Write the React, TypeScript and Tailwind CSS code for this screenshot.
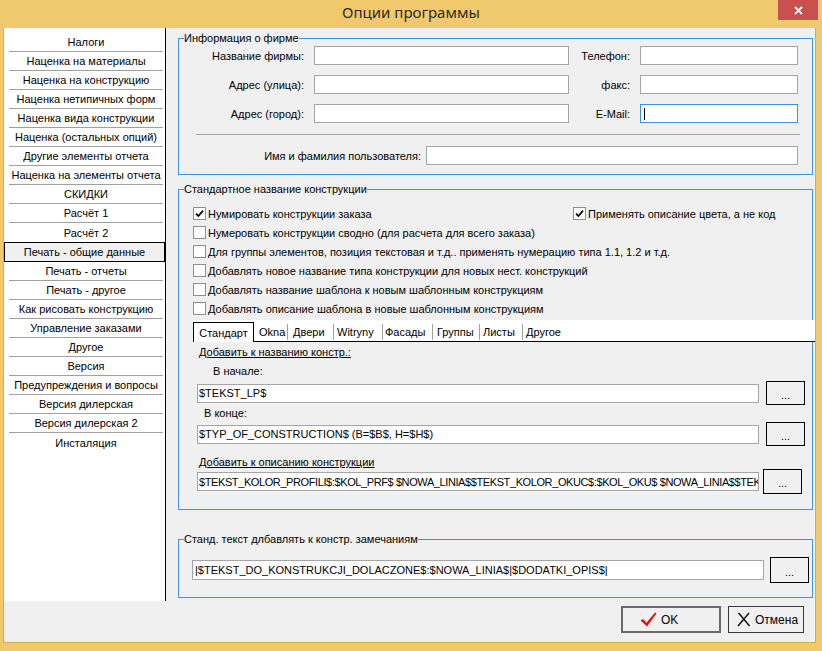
import * as React from "react"
import { clsx } from "clsx"

const navBefore = [
  "Налоги",
  "Наценка на материалы",
  "Наценка на конструкцию",
  "Наценка нетипичных форм",
  "Наценка вида конструкции",
  "Наценка (остальных опций)",
  "Другие элементы отчета",
  "Наценка на элементы отчета",
  "СКИДКИ",
  "Расчёт 1",
  "Расчёт 2",
]

const navAfter = [
  "Печать - отчеты",
  "Печать - другое",
  "Как рисовать конструкцию",
  "Управление заказами",
  "Другое",
  "Версия",
  "Предупреждения и вопросы",
  "Версия дилерская",
  "Версия дилерская 2",
  "Инсталяция",
]

const tabs = [
  { label: "Okna", w: "w-[33px]", pl: "pl-[5px]" },
  { label: "Двери", w: "w-[45px]", pl: "pl-[5px]" },
  { label: "Witryny", w: "w-[48px]", pl: "pl-[3px]" },
  { label: "Фасады", w: "w-[49px]", pl: "pl-[2px]" },
  { label: "Группы", w: "w-[46px]", pl: "pl-[4px]" },
  { label: "Листы", w: "w-[42px]", pl: "pl-[3px]" },
  { label: "Другое", w: "w-[44px]", pl: "pl-[3px]" },
]

function NavItem({ label, last }: { label: string; last?: boolean }) {
  return (
    <div
      className={clsx(
        "ml-[5px] mr-[2px] flex h-[19px] items-center justify-center whitespace-nowrap",
        !last && "border-b border-[#a0a0a0]"
      )}
    >
      {label}
    </div>
  )
}

function SideNav() {
  return (
    <div className="h-[573px] w-[162px] shrink-0 border-r border-black bg-white pt-[5px]">
      {navBefore.map((item, i) => (
        <NavItem key={item} label={item} last={i === navBefore.length - 1} />
      ))}
      <div className="flex h-[20px] items-center justify-center border border-black bg-[#f0f0f0]">
        Печать - общие данные
      </div>
      {navAfter.map((item, i) => (
        <NavItem key={item} label={item} last={i === navAfter.length - 1} />
      ))}
    </div>
  )
}

function GroupBox({
  title,
  className,
  children,
}: {
  title: string
  className?: string
  children: React.ReactNode
}) {
  return (
    <div className={clsx("relative border border-[#3f93e3]", className)}>
      <span className="absolute -top-[8px] left-[5px] bg-[#f0f0f0] leading-[14px]">
        {title}
      </span>
      {children}
    </div>
  )
}

function Field({
  className,
  focused,
  children,
}: {
  className?: string
  focused?: boolean
  children?: React.ReactNode
}) {
  return (
    <div
      className={clsx(
        "flex h-[19px] shrink-0 items-center overflow-hidden whitespace-nowrap border bg-white pl-[1px]",
        focused ? "border-[#3c94e4]" : "border-[#a5a5a5]",
        className
      )}
    >
      {children}
    </div>
  )
}

function DotsButton({ className }: { className?: string }) {
  return (
    <div
      className={clsx(
        "flex w-[39px] shrink-0 items-center justify-center border border-black bg-[#f0f0f0] pt-[3px]",
        className
      )}
    >
      ...
    </div>
  )
}

function CheckBox({ checked, label }: { checked?: boolean; label: string }) {
  return (
    <div className="flex h-[19px] items-center whitespace-nowrap">
      <span className="flex h-[13px] w-[13px] shrink-0 items-center justify-center border border-[#8f8f8f] bg-white">
        {checked && (
          <svg width="9" height="9" viewBox="0 0 9 9">
            <path d="M1 4.6 L3.4 7 L8 1.6" fill="none" stroke="#000" strokeWidth="1.7" />
          </svg>
        )}
      </span>
      <span className="ml-[2px]">{label}</span>
    </div>
  )
}

function TitleBar() {
  return (
    <div className="relative h-[28px] shrink-0 text-center">
      <div className="pt-[2px] font-['Noto_Sans',sans-serif] text-[15px] leading-[20px] text-[#2b2b2b]">
        Опции программы
      </div>
      <div className="absolute right-[4px] top-0 flex h-[20px] w-[40px] items-center justify-center bg-[#c75050]">
        <svg width="9" height="9" viewBox="0 0 9 9">
          <path d="M1 1 L8 8 M8 1 L1 8" stroke="#fff" strokeWidth="1.8" />
        </svg>
      </div>
    </div>
  )
}

export default function App() {
  return (
    <div className="flex h-[651px] w-[822px] flex-col bg-[#f0c96c] font-['Liberation_Sans',Arial,sans-serif] text-[11px] leading-[14px] text-black">
      <TitleBar />
      <div className="mb-[8px] ml-[3px] mr-[6px] flex flex-1 border-x border-b border-[#d4ab57] bg-[#f0f0f0]">
        <SideNav />
        <main className="flex w-[649px] shrink-0 flex-col pl-[12px] pr-[2px]">
          <GroupBox title="Информация о фирме" className="mt-[10px] pb-[9px] pt-[7px]">
            <div className="flex items-center">
              <span className="w-[125px] shrink-0 text-right">Название фирмы:</span>
              <Field className="ml-[10px] w-[255px]" />
              <span className="w-[61px] shrink-0 text-right">Телефон:</span>
              <Field className="ml-[10px] w-[158px]" />
            </div>
            <div className="mt-[10px] flex items-center">
              <span className="w-[125px] shrink-0 text-right">Адрес (улица):</span>
              <Field className="ml-[10px] w-[255px]" />
              <span className="w-[61px] shrink-0 text-right">факс:</span>
              <Field className="ml-[10px] w-[158px]" />
            </div>
            <div className="mt-[10px] flex items-center">
              <span className="w-[125px] shrink-0 text-right">Адрес (город):</span>
              <Field className="ml-[10px] w-[255px]" />
              <span className="w-[61px] shrink-0 text-right">E-Mail:</span>
              <Field focused className="ml-[10px] w-[158px] pl-[3px]">
                <span className="h-[12px] w-px bg-black" />
              </Field>
            </div>
            <div className="ml-[17px] mt-[11px] h-px w-[604px] bg-[#a0a0a0]" />
            <div className="mt-[11px] flex items-center">
              <span className="w-[242px] shrink-0 text-right">Имя и фамилия пользователя:</span>
              <Field className="ml-[5px] w-[372px]" />
            </div>
          </GroupBox>

          <GroupBox
            title="Стандартное название конструкции"
            className="mt-[14px] pb-[15px] pl-[14px] pt-[14px]"
          >
            <div className="flex">
              <div className="w-[380px] shrink-0">
                <CheckBox checked label="Нумировать конструкции заказа" />
              </div>
              <CheckBox checked label="Применять описание цвета, а не код" />
            </div>
            <CheckBox label="Нумеровать конструкции сводно (для расчета для всего заказа)" />
            <CheckBox label="Для группы элементов, позиция текстовая и т.д.. применять нумерацию типа 1.1, 1.2 и т.д." />
            <CheckBox label="Добавлять новое название типа конструкции для новых нест. конструкций" />
            <CheckBox label="Добавлять название шаблона к новым шаблонным конструкциям" />
            <CheckBox label="Добавлять описание шаблона в новые шаблонным конструкциям" />

            <div className="mt-[2px] flex h-[22px] w-[622px] items-end border-b border-black bg-white">
              <div className="relative -mb-px flex h-[20px] w-[61px] shrink-0 items-center justify-center border border-b-0 border-black bg-white">
                Стандарт
              </div>
              {tabs.map((tab, i) => (
                <React.Fragment key={tab.label}>
                  <div className={clsx("flex h-[19px] shrink-0 items-center whitespace-nowrap", tab.w, tab.pl)}>
                    {tab.label}
                  </div>
                  {i < tabs.length - 1 && (
                    <span className="mb-[1px] h-[16px] w-px shrink-0 bg-[#a0a0a0]" />
                  )}
                </React.Fragment>
              ))}
            </div>

            <div className="ml-[6px] mt-[3px] underline">Добавить к названию констр.:</div>
            <div className="ml-[20px] mt-[5px]">В начале:</div>
            <div className="ml-[4px] mt-[3px] flex h-[24px] items-center">
              <Field className="w-[562px]">$TEKST_LP$</Field>
              <DotsButton className="ml-[7px] h-[24px]" />
            </div>
            <div className="ml-[11px] mt-[1px]">В конце:</div>
            <div className="ml-[4px] mt-[2px] flex h-[24px] items-center">
              <Field className="w-[562px]">$TYP_OF_CONSTRUCTION$ (B=$B$, H=$H$)</Field>
              <DotsButton className="ml-[7px] h-[24px]" />
            </div>
            <div className="ml-[6px] mt-[9px] underline">Добавить к описанию конструкции</div>
            <div className="ml-[4px] flex h-[25px] items-center">
              <Field className="w-[562px] tracking-[-0.4px]">
                $TEKST_KOLOR_PROFILI$:$KOL_PRF$ $NOWA_LINIA$$TEKST_KOLOR_OKUC$:$KOL_OKU$ $NOWA_LINIA$$TEKS
              </Field>
              <DotsButton className="ml-[4px] h-[25px]" />
            </div>
          </GroupBox>

          <GroupBox
            title="Станд. текст длбавлять к констр. замечаниям"
            className="mt-[29px] pb-[14px] pt-[17px]"
          >
            <div className="ml-[13px] flex h-[26px] items-center">
              <Field className="h-[20px] w-[572px] pl-[2px]">
                |$TEKST_DO_KONSTRUKCJI_DOLACZONE$:$NOWA_LINIA$|$DODATKI_OPIS$|
              </Field>
              <DotsButton className="ml-[6px] h-[26px]" />
            </div>
          </GroupBox>

          <div className="mt-[8px] flex justify-end gap-[7px] pr-[9px]">
            <div className="flex h-[27px] w-[100px] items-center gap-[4px] border-2 border-[#6b6b6b] bg-[#f0f0f0] pl-[17px]">
              <svg width="17" height="15" viewBox="0 0 17 15">
                <path d="M0.5 8.5 L3 7 L6.5 10.8 L15 0.5 L16.5 1.5 L7 14.5 Z" fill="#e01414" />
              </svg>
              <span className="text-[12px]">OK</span>
            </div>
            <div className="flex h-[27px] w-[76px] items-center gap-[4px] border border-[#3a3a3a] bg-[#f0f0f0] pl-[8px]">
              <svg width="14" height="15" viewBox="0 0 14 15">
                <path d="M1.5 1 Q6 6 12.5 14 M12 1 Q7 7 1 14" fill="none" stroke="#111" strokeWidth="1.5" />
              </svg>
              <span className="text-[12px]">Отмена</span>
            </div>
          </div>
        </main>
      </div>
    </div>
  )
}
